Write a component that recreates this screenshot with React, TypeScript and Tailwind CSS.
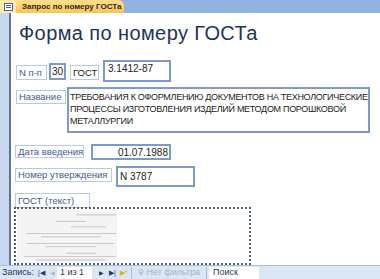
import React from 'react';

const font = { fontFamily: '"Liberation Sans", "Noto Sans", sans-serif' };

function Label({ text, className }: { text: string; className: string }) {
  return (
    <div className={`border border-[#b9c9e4] text-[#3f5a8e] text-[9.5px] leading-none whitespace-nowrap overflow-hidden flex items-center pl-[2px] ${className}`}>
      {text}
    </div>
  );
}

function DocImage() {
  const lines = [
    [60, 6, 40], [40, 18, 30], [55, 28, 35], [10, 40, 90], [25, 46, 60], [10, 58, 88], [30, 64, 50],
    [50, 76, 30], [8, 82, 92], [20, 88, 70],
  ];
  return (
    <svg width="234" height="56" viewBox="0 0 234 56">
      <rect x="1" y="0" width="100" height="56" fill="#f4f4f4" />
      {lines.map(([x, y, w], i) => (
        <rect key={i} x={x} y={y * 0.55 + 2} width={w} height="1" fill="#c8c8c8" />
      ))}
    </svg>
  );
}

export default function App() {
  return (
    <div className="w-[380px] h-[279px] flex flex-col overflow-hidden bg-white" style={font}>
      {/* tab bar */}
      <div className="h-[13px] bg-[#94b2df] flex items-end shrink-0">
        <div className="w-[16px] h-[13px] bg-[#fde9a8] flex items-center justify-center">
          <div className="w-[9px] h-[8px] border border-[#3d63a8] bg-white flex flex-col gap-[1px] p-[1px]">
            <div className="h-[1px] bg-[#3d63a8]" />
            <div className="h-[1px] bg-[#3d63a8]" />
          </div>
        </div>
        <div className="h-[13px] w-[108px] bg-gradient-to-b from-[#fde08c] to-[#f8c552] rounded-tr-[6px] flex items-center pl-[6px] text-[8px] font-bold text-[#2a2a2a]">
          Запрос по номеру ГОСТа
        </div>
      </div>

      {/* form body */}
      <div className="flex flex-1 min-h-0">
        <div className="w-[11px] bg-[#c9d8ef] border-r-2 border-[#5f7398] shrink-0" />
        <div className="flex-1 pl-[3px] flex flex-col">
          <div className="text-[20px] leading-none text-[#22335a] ml-[5px] mt-[10px] tracking-[0.4px]">Форма по номеру ГОСТа</div>

          <div className="flex items-start mt-[17px] ml-[2px]">
            <Label text="N п-п" className="w-[31px] h-[15px] mt-[5px]" />
            <div className="w-[17px] h-[17px] border-2 border-[#7b9bd0] mt-[3px] ml-[2px] text-[10px] text-[#222] flex items-center justify-center">30</div>
            <Label text="ГОСТ" className="w-[29px] h-[15px] mt-[5px] ml-[4px] text-[#222]" />
            <div className="w-[68px] h-[22px] border-2 border-[#7b9bd0] ml-[4px] text-[10px] text-[#222] pl-[3px] pt-[1px] leading-[12px]">3.1412-87</div>
          </div>

          <div className="flex items-start mt-[5px] ml-[2px]">
            <Label text="Название" className="w-[50px] h-[14px] mt-[3px]" />
            <div className="w-[303px] h-[46px] border-2 border-[#7b9bd0] ml-[1px] text-[9px] text-[#222] pl-[1px] pt-[2px] leading-[12px] tracking-[-0.3px]">
              ТРЕБОВАНИЯ К ОФОРМЛЕНИЮ ДОКУМЕНТОВ НА ТЕХНОЛОГИЧЕСКИЕ<br />
              ПРОЦЕССЫ ИЗГОТОВЛЕНИЯ ИЗДЕЛИЙ МЕТОДОМ ПОРОШКОВОЙ<br />
              МЕТАЛЛУРГИИ
            </div>
          </div>

          <div className="flex items-start mt-[11px] ml-[1px]">
            <Label text="Дата введения" className="w-[69px] h-[13px] mt-[1px]" />
            <div className="w-[80px] h-[16px] border-2 border-[#7b9bd0] ml-[7px] text-[10px] text-[#222] flex items-center justify-end pr-[1px]">01.07.1988</div>
          </div>

          <div className="flex items-start mt-[6px] ml-[1px]">
            <Label text="Номер утверждения" className="w-[97px] h-[14px] mt-[2px]" />
            <div className="w-[79px] h-[21px] border-2 border-[#7b9bd0] ml-[4px] text-[10px] text-[#222] pl-[2px] flex items-center">N 3787</div>
          </div>

          <Label text="ГОСТ (текст)" className="w-[75px] h-[15px] mt-[6px] ml-[1px]" />
          <div className="w-[237px] h-[59px] border-2 border-dotted border-[#4d5f80] mt-[-1px] overflow-hidden">
            <DocImage />
          </div>
        </div>
      </div>

      {/* record navigator */}
      <div className="h-[14px] shrink-0 bg-[#dbe6f5] border-t border-[#a9bfe2] flex items-center text-[9px] text-[#1f3864] leading-none">
        <span className="ml-[2px]">Запись:</span>
        <span className="ml-[4px] text-[7px] text-[#1f3864]">|◀</span>
        <span className="ml-[5px] text-[6px] text-[#a8b8d0]">◀</span>
        <div className="ml-[2px] w-[35px] h-[12px] bg-white flex items-center pl-[3px]">1 из 1</div>
        <span className="ml-[7px] text-[6px]">▶</span>
        <span className="ml-[5px] text-[7px]">▶|</span>
        <span className="ml-[4px] text-[7px] text-[#d8b21c]">▶*</span>
        <div className="ml-[4px] w-px h-[12px] bg-[#a9bfe2]" />
        <span className="ml-[6px] text-[8px] text-[#9aa9c0]">⚲</span>
        <span className="ml-[2px] text-[#a3b1c7]">Нет фильтра</span>
        <div className="ml-[6px] w-px h-[12px] bg-[#a9bfe2]" />
        <div className="ml-[2px] w-[50px] h-[12px] bg-white flex items-center pl-[4px]">Поиск</div>
      </div>
    </div>
  );
}
